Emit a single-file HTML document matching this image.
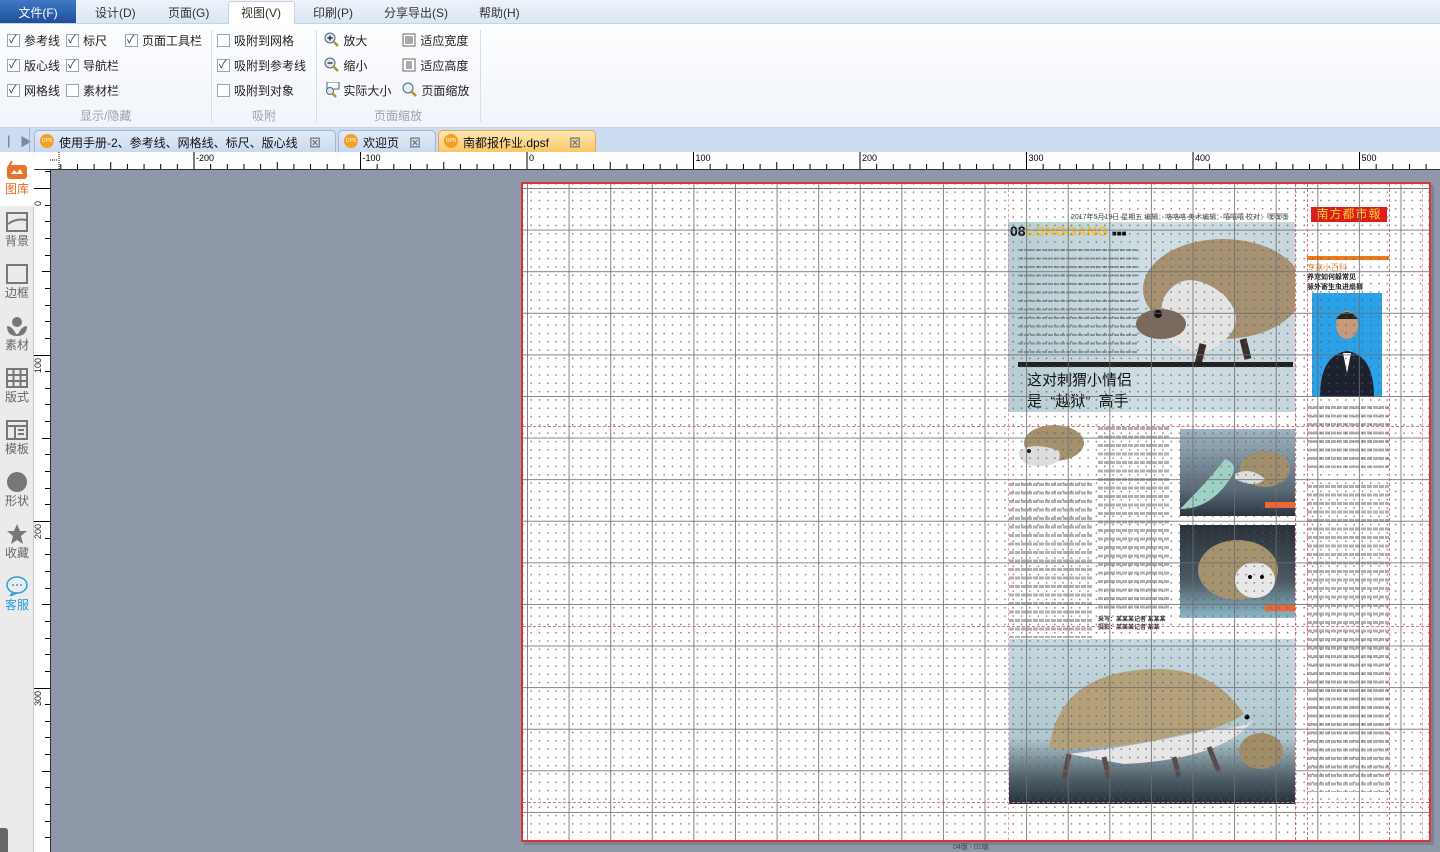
<!DOCTYPE html>
<html><head><meta charset="utf-8">
<style>
*{margin:0;padding:0;box-sizing:border-box}
body{width:1440px;height:852px;overflow:hidden;font-family:"Liberation Sans","Noto Sans CJK SC",sans-serif;font-size:12px;color:#222;background:#8f98a9;position:relative}
.abs{position:absolute}
#menu{left:0;top:0;width:1440px;height:24px;background:linear-gradient(#eef3fa,#dbe6f3);border-bottom:1px solid #c5d3e6}
#menu span{position:absolute;top:4px;font-size:12px;color:#333}
#file{left:0;top:0;width:76px;height:23px;background:linear-gradient(#3f78c4,#1f4f9a);color:#fff!important;text-align:center;padding-top:4px;top:0!important}
#vtab{left:228px;top:1px;width:67px;height:24px;background:#fff;border:1px solid #c5d3e6;border-bottom:none;border-radius:3px 3px 0 0}
#ribbon{left:0;top:24px;width:1440px;height:104px;background:linear-gradient(#fdfeff,#f1f4f9);border-bottom:1px solid #c7d3e3}
.cb{position:absolute;font-size:12px;color:#222;padding-left:17px;height:14px;line-height:14px}
.cb:before{content:"";position:absolute;left:0;top:0;width:11px;height:11px;border:1px solid #9aa6b5;background:#fff}
.cb.on:after{content:"✓";position:absolute;left:2px;top:-1px;font-size:11px;color:#333}
.gl{position:absolute;top:83px;font-size:12px;color:#9aa3b0}
.sep{position:absolute;top:6px;width:1px;height:92px;background:#d7dee8}
#tabs{left:0;top:128px;width:1440px;height:24px;background:#cddcf0}
.tab{position:absolute;top:2px;height:22px;border-radius:5px 5px 0 0;background:linear-gradient(#e3ecf8,#c9d9f0);border:1px solid #9fb5d6;border-bottom:none;font-size:12px;padding:3px 0 0 24px;color:#111}
.tab .d{position:absolute;left:5px;top:3px;width:14px;height:14px;border-radius:50%;background:#f2a026;font-size:5px;color:#fff;text-align:center;line-height:14px}
.tab .x{position:absolute;right:14px;top:3px;color:#777;font-weight:bold}
#side{left:0;top:152px;width:34px;height:700px;background:#ebebeb;border-right:1px solid #c8c8c8}
.si{position:absolute;left:2px;width:30px;text-align:center;font-size:12px;color:#666}
#rtop{left:34px;top:152px;width:1406px;height:18px;background:#fff;border-bottom:1px solid #333}
#rleft{left:34px;top:170px;width:17px;height:682px;background:#fff;border-right:1px solid #333}
#page{left:521px;top:182px;width:910px;height:660px;background:#fff;border:2px solid #d33;box-shadow:3px 3px 0 #7a8396}
.tx{position:absolute;background:repeating-linear-gradient(#fff 0 3px,#b0b0b0 3px 6px,#fff 6px 8.5px);-webkit-mask:repeating-linear-gradient(90deg,#000 0 5px,transparent 5px 6px)}
#grid{position:absolute;left:0;top:0;width:906px;height:656px;pointer-events:none;
background-image:
linear-gradient(90deg,rgba(110,110,110,.85) 1px,transparent 1px),
linear-gradient(rgba(110,110,110,.85) 1px,transparent 1px),
radial-gradient(circle,rgba(90,90,90,.75) 0.7px,transparent 0.9px);
background-size:41.6px 41.6px,41.6px 41.6px,8.32px 8.32px;
background-position:4px 0,0 4px,4px 4px}
.rd{position:absolute;border-color:#e07080;border-style:dashed;border-width:0}
</style></head><body>

<div id="menu" class="abs">
<div id="vtab" class="abs"></div>
<span id="file" class="abs">文件(F)</span>
<span style="left:95px">设计(D)</span>
<span style="left:168px">页面(G)</span>
<span style="left:241px">视图(V)</span>
<span style="left:313px">印刷(P)</span>
<span style="left:384px">分享导出(S)</span>
<span style="left:479px">帮助(H)</span>
</div>

<div id="ribbon" class="abs">
<div class="cb on" style="left:7px;top:10px">参考线</div>
<div class="cb on" style="left:66px;top:10px">标尺</div>
<div class="cb on" style="left:125px;top:10px">页面工具栏</div>
<div class="cb on" style="left:7px;top:35px">版心线</div>
<div class="cb on" style="left:66px;top:35px">导航栏</div>
<div class="cb on" style="left:7px;top:60px">网格线</div>
<div class="cb" style="left:66px;top:60px">素材栏</div>
<div class="gl" style="left:80px">显示/隐藏</div>
<div class="sep" style="left:211px"></div>
<div class="cb" style="left:217px;top:10px">吸附到网格</div>
<div class="cb on" style="left:217px;top:35px">吸附到参考线</div>
<div class="cb" style="left:217px;top:60px">吸附到对象</div>
<div class="gl" style="left:252px">吸附</div>
<div class="sep" style="left:316px"></div>
<div class="abs" style="left:324px;top:8px;font-size:12px"><svg width="16" height="16" style="vertical-align:-3px"><circle cx="6" cy="6" r="5" fill="#dde6f0" stroke="#567" /><path d="M3.5 6h5M6 3.5v5" stroke="#234" stroke-width="1.4"/><path d="M10 10l4 4" stroke="#b8902c" stroke-width="2.5"/></svg> 放大</div>
<div class="abs" style="left:324px;top:33px;font-size:12px"><svg width="16" height="16" style="vertical-align:-3px"><circle cx="6" cy="6" r="5" fill="#dde6f0" stroke="#567"/><path d="M3.5 6h5" stroke="#234" stroke-width="1.4"/><path d="M10 10l4 4" stroke="#b8902c" stroke-width="2.5"/></svg> 缩小</div>
<div class="abs" style="left:324px;top:58px;font-size:12px"><svg width="16" height="16" style="vertical-align:-3px"><rect x="3" y="0" width="12" height="7" fill="#fff" stroke="#567"/><circle cx="6" cy="9" r="3.5" fill="#dde6f0" stroke="#567"/><path d="M8 11l4 4" stroke="#b8902c" stroke-width="2.5"/></svg> 实际大小</div>
<div class="abs" style="left:402px;top:8px;font-size:12px"><svg width="15" height="14" style="vertical-align:-2px"><rect x="1" y="1" width="12" height="12" fill="#fff" stroke="#666"/><path d="M3 4h8M3 6h8M3 8h8M3 10h8" stroke="#555"/></svg> 适应宽度</div>
<div class="abs" style="left:402px;top:33px;font-size:12px"><svg width="15" height="14" style="vertical-align:-2px"><rect x="1" y="1" width="12" height="12" fill="#fff" stroke="#666"/><path d="M4 4h6M4 6h6M4 8h6M4 10h6" stroke="#555"/></svg> 适应高度</div>
<div class="abs" style="left:402px;top:58px;font-size:12px"><svg width="16" height="16" style="vertical-align:-3px"><circle cx="6" cy="6" r="5" fill="#e6eef6" stroke="#567"/><path d="M10 10l4 4" stroke="#b8902c" stroke-width="2.5"/></svg> 页面缩放</div>
<div class="gl" style="left:374px">页面缩放</div>
<div class="sep" style="left:480px"></div>
</div>

<div id="tabs" class="abs">
<div class="abs" style="left:8px;top:5px;color:#7a8aa0;font-size:12px">▏▶</div>
<div class="abs" style="left:29px;top:0;width:1px;height:24px;background:#9fb5d6"></div>
<div class="tab" style="left:34px;width:302px"><span class="d">DPS</span>使用手册-2、参考线、网格线、标尺、版心线<span class="x">⊠</span></div>
<div class="tab" style="left:338px;width:98px"><span class="d">DPS</span>欢迎页<span class="x">⊠</span></div>
<div class="tab" style="left:438px;width:158px;background:linear-gradient(#fde7b4,#f8c768);border-color:#e3a94a"><span class="d">DPS</span>南都报作业.dpsf<span class="x">⊠</span></div>
</div>

<div id="side" class="abs">
<div class="abs" style="left:0;top:0;width:34px;height:54px;background:#fff"></div>
<div class="si" style="top:8px"><svg width="24" height="20"><rect x="2" y="5" width="20" height="14" rx="3" fill="#e8742a"/><path d="M6 14l3-4 3 3 3-4 3 5z" fill="#fff"/><path d="M4 6l3-5" stroke="#e8742a" stroke-width="2"/></svg><div style="color:#e06a1f;margin-top:-3px">图库</div></div>
<div class="si" style="top:60px"><svg width="22" height="20"><rect x="1" y="1" width="20" height="18" fill="none" stroke="#777" stroke-width="2"/><path d="M2 12q8-6 18-4" stroke="#777" stroke-width="2" fill="none"/></svg><div style="margin-top:-3px">背景</div></div>
<div class="si" style="top:112px"><svg width="22" height="20"><rect x="1" y="1" width="20" height="18" fill="none" stroke="#777" stroke-width="2"/></svg><div style="margin-top:-3px">边框</div></div>
<div class="si" style="top:164px"><svg width="22" height="20"><circle cx="11" cy="6" r="5" fill="#777"/><path d="M1 10q5 0 9 8h2q4-8 9-8q0 10-10 10q-10 0-10-10z" fill="#777"/></svg><div style="margin-top:-3px">素材</div></div>
<div class="si" style="top:216px"><svg width="22" height="20"><rect x="1" y="1" width="20" height="18" fill="none" stroke="#777" stroke-width="2"/><path d="M7.5 1v18M14.5 1v18M1 7h20M1 13h20" stroke="#777" stroke-width="2"/></svg><div style="margin-top:-3px">版式</div></div>
<div class="si" style="top:268px"><svg width="22" height="20"><rect x="1" y="1" width="20" height="18" fill="none" stroke="#777" stroke-width="2"/><path d="M1 6h20M9 6v13M12 10h6M12 14h6" stroke="#777" stroke-width="2"/></svg><div style="margin-top:-3px">模板</div></div>
<div class="si" style="top:320px"><svg width="22" height="20"><circle cx="11" cy="10" r="10" fill="#777"/></svg><div style="margin-top:-3px">形状</div></div>
<div class="si" style="top:372px"><svg width="22" height="20"><path d="M11 0l3 7h7l-6 5 2 8-6-4-6 4 2-8-6-5h7z" fill="#777"/></svg><div style="margin-top:-3px">收藏</div></div>
<div class="si" style="top:424px"><svg width="24" height="20"><ellipse cx="12" cy="9" rx="10" ry="8" fill="none" stroke="#2aa0dc" stroke-width="1.5"/><path d="M8 16l-3 4 7-3" fill="none" stroke="#2aa0dc" stroke-width="1.5"/><circle cx="8" cy="9" r="1" fill="#2aa0dc"/><circle cx="12" cy="9" r="1" fill="#2aa0dc"/><circle cx="16" cy="9" r="1" fill="#2aa0dc"/></svg><div style="color:#2a9ad6;margin-top:-3px">客服</div></div>
<div class="abs" style="left:0;top:676px;width:8px;height:24px;background:#666;border-radius:0 3px 0 0"></div>
</div>

<div id="rtop" class="abs">
<svg class="abs" style="left:16px;top:0" width="1390" height="18">
<path d="M0 8h8M9 0v17" stroke="#000" stroke-dasharray="1 1"/>
<g stroke="#000"></g>
</svg>
</div>
<div id="rleft" class="abs"></div>

<div id="page" class="abs">
<div class="abs" style="left:548px;top:28px;font-size:7px;color:#444;white-space:nowrap">2017年5月19日 星期五 编辑：咯咯咯 美术编辑：嘻嘻嘻 校对：嘿嘿嘿</div>
<div class="abs" style="left:788px;top:23px;width:76px;height:15px;background:#e41b14;color:#ffd23a;font-size:12px;line-height:15px;text-align:center;letter-spacing:1px">南方都市報</div>
<div class="abs" style="left:485px;top:38px;width:287px;height:190px;background:linear-gradient(90deg,#b8cdd4,#cfdfe4 50%,#c6d6dc)"></div>
<div class="abs" style="left:487px;top:39px;font-size:14px;font-weight:bold;color:#111">08<span style="color:#f0bf3a">LONGGANG</span> <span style="font-size:8px">■■■</span></div>
<div class="tx" style="left:495px;top:62px;width:120px;height:110px;background:repeating-linear-gradient(transparent 0 3px,#8a9296 3px 5px,transparent 5px 8.5px)"></div>
<svg class="abs" style="left:590px;top:45px" width="182" height="135"><ellipse cx="110" cy="60" rx="80" ry="50" fill="#a69272"/><path d="M50 70q20-35 60-5q30 30-10 55q-30 10-55-20z" fill="#e4e4e4"/><ellipse cx="48" cy="95" rx="25" ry="15" fill="#7a6a5e"/><circle cx="45" cy="85" r="4" fill="#111"/><path d="M90 115l-5 20M130 110l5 20" stroke="#3a2e2a" stroke-width="7"/></svg>
<div class="abs" style="left:495px;top:178px;width:275px;height:5px;background:#222"></div>
<div class="abs" style="left:504px;top:186px;font-size:15px;color:#111;line-height:21px">这对刺猬小情侣<br>是&nbsp;&nbsp;“越狱”&nbsp;&nbsp;高手</div>
<div class="abs" style="left:784px;top:72px;width:82px;height:4px;background:#ec7a1c"></div>
<div class="abs" style="left:784px;top:78px;font-size:8px;color:#ec8a3a">专家小百科</div>
<div class="abs" style="left:784px;top:89px;font-size:7px;color:#222;line-height:10px;font-weight:bold">养宠如何躲常见<br>脉外寄生虫进扇舞</div>
<div class="abs" style="left:789px;top:109px;width:70px;height:104px;background:#2ba2e8;overflow:hidden"><svg width="70" height="104"><path d="M8 104q0-42 27-46q27 4 27 46z" fill="#1c2230"/><ellipse cx="35" cy="32" rx="11" ry="14" fill="#c99a7a"/><path d="M24 26q11-14 22 0" fill="#222"/><path d="M31 60l4 20 4-20z" fill="#fff"/></svg></div>
<div class="tx" style="left:784px;top:219px;width:82px;height:65px"></div>
<div class="tx" style="left:784px;top:298px;width:82px;height:310px"></div>
<svg class="abs" style="left:486px;top:237px" width="80" height="50"><ellipse cx="45" cy="22" rx="30" ry="18" fill="#a4916e"/><path d="M10 30q15-10 40 0q5 15-20 15q-20 0-20-15z" fill="#ddd"/><circle cx="20" cy="30" r="2" fill="#111"/></svg>
<div class="tx" style="left:486px;top:296px;width:84px;height:158px"></div>
<div class="tx" style="left:575px;top:240px;width:72px;height:188px"></div>
<div class="abs" style="left:575px;top:432px;font-size:6px;font-weight:bold;color:#333;line-height:8px">采写：某某某记者 某某某<br>摄影：某某某记者 某某</div>
<div class="abs" style="left:657px;top:245px;width:115px;height:87px;background:linear-gradient(#9eb4c0,#5a6a78 70%,#2c3540)"><svg width="115" height="87"><path d="M0 80q30-30 45-50q15 5 5 20q-20 30-50 30z" fill="#9fd0c4"/><ellipse cx="85" cy="40" rx="25" ry="18" fill="#a08e6c"/><path d="M55 45q15-8 30 5q-10 10-30 0z" fill="#ddd"/></svg><div class="abs" style="right:0;top:73px;width:30px;height:6px;background:#e63"></div></div>
<div class="abs" style="left:657px;top:341px;width:115px;height:93px;background:linear-gradient(#2a3038,#4a5a64 60%,#8cb8c8)"><svg width="115" height="93"><ellipse cx="58" cy="45" rx="40" ry="30" fill="#a5926e"/><ellipse cx="75" cy="55" rx="20" ry="18" fill="#e8e8e8"/><circle cx="70" cy="52" r="2" fill="#000"/><circle cx="82" cy="52" r="2" fill="#000"/></svg><div class="abs" style="right:0;top:80px;width:30px;height:6px;background:#e63"></div></div>
<div class="abs" style="left:486px;top:455px;width:286px;height:165px;background:linear-gradient(#c7d9e0,#b0c7d0 60%,#4d5d68 85%,#243038)"><svg width="286" height="165"><path d="M40 110q10-80 110-80q55 0 85 45q-20 15-60 20q-60 15-135 15z" fill="#b4a07a"/><path d="M60 115q80-10 145-25q30 0 40-10q-30 40-130 45z" fill="#e6e6e6"/><circle cx="238" cy="78" r="2.5" fill="#000"/><path d="M60 115l-5 25M95 118l5 22M165 118l5 20M200 108l10 25" stroke="#5a4c4c" stroke-width="5"/><ellipse cx="252" cy="112" rx="22" ry="18" fill="#a08c66"/></svg></div>
<div class="rd" style="left:6px;top:4px;width:898px;border-top-width:1px"></div>
<div class="rd" style="left:0;top:242px;width:906px;border-top-width:1px"></div>
<div class="rd" style="left:0;top:442px;width:906px;border-top-width:1px"></div>
<div class="rd" style="left:0;top:618px;width:906px;border-top-width:1px"></div>
<div class="rd" style="left:485px;top:0;height:656px;border-left-width:1px;opacity:.6"></div>
<div class="rd" style="left:772px;top:0;height:656px;border-left-width:1px"></div>
<div class="rd" style="left:784px;top:0;height:656px;border-left-width:1px"></div>
<div class="rd" style="left:866px;top:0;height:656px;border-left-width:1px"></div>
<div class="rd" style="left:899px;top:0;height:656px;border-left-width:1px;opacity:.6"></div>
<div id="grid"></div>
</div>
<div class="abs" style="left:953px;top:842px;font-size:7px;color:#444">04版 - 01版</div>

<script>
(function(){
var s=document.querySelector('#rtop svg g'),h='';
for(var i=-30;i<=60;i++){var x=477+i*16.65;if(x<10||x>1390)continue;var big=i%10==0,mid=i%5==0;h+='<line x1="'+x+'" x2="'+x+'" y1="'+(big?0:(mid?10:12))+'" y2="17"/>';if(big)h+='<text x="'+(x+2)+'" y="9" font-size="9" stroke="none" fill="#000" font-family="Liberation Sans">'+(i*10)+'</text>';}
s.innerHTML=h;
var l=document.getElementById('rleft'),o='';
for(var j=-1;j<=45;j++){var y=18+j*16.65;if(y<0||y>682)continue;var b=j%10==0,m=j%5==0;o+='<div style="position:absolute;left:'+(b?0:(m?8:11))+'px;top:'+y+'px;width:'+(b?16:(m?8:5))+'px;height:1px;background:#000"></div>';if(b)o+='<div style="position:absolute;left:-1px;top:'+(y+2)+'px;font-size:9px;transform:rotate(-90deg);transform-origin:0 0;margin-top:16px">'+(j*10)+'</div>';}
l.innerHTML=o;
})();
</script>
</body></html>
